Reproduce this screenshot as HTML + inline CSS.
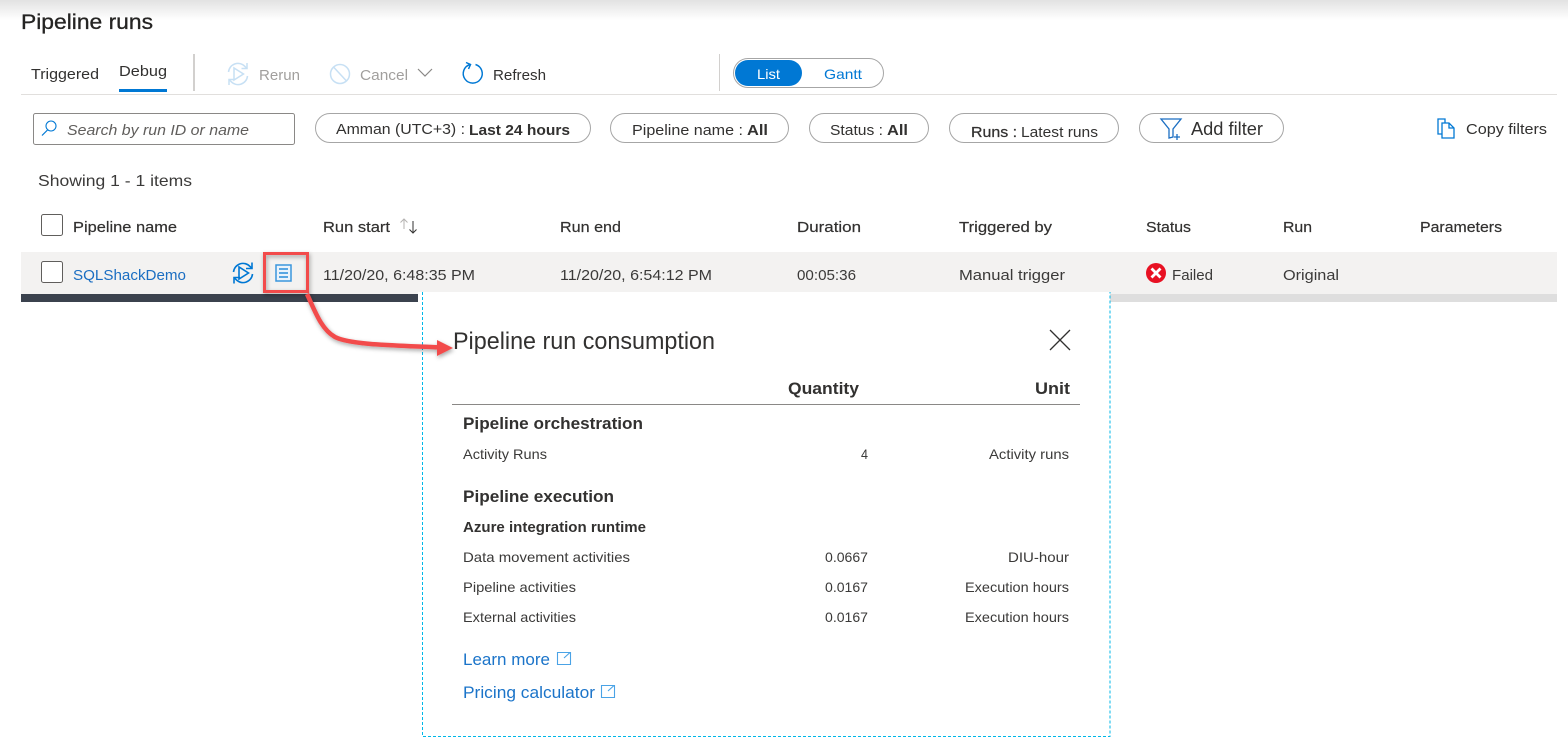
<!DOCTYPE html>
<html lang="en"><head><meta charset="utf-8"><title>Pipeline runs</title>
<style>
html,body{margin:0;padding:0;background:#fff;width:1568px;height:737px;overflow:hidden}
svg{display:block}
text{font-family:"Liberation Sans",Arial,sans-serif;fill:#323130;font-size:15px}
.b{font-weight:700}
.s{stroke:#323130;stroke-width:.25px}
.h{font-size:15px;stroke:#323130;stroke-width:.2px}
.r{font-size:15px;fill:#3b3a39}
.l{fill:#1b6ec2}
.m{font-size:14px;fill:#3b3a39}
.pill{fill:#fff;stroke:#a6a6a6;stroke-width:1}
</style></head><body>
<svg width="1568" height="737" viewBox="0 0 1568 737" xmlns="http://www.w3.org/2000/svg">
<defs>
<linearGradient id="g" x1="0" y1="0" x2="0" y2="1"><stop offset="0" stop-color="#e2e2e2"/><stop offset="1" stop-color="#fff"/></linearGradient>
<filter id="sh" x="-30%" y="-30%" width="160%" height="160%"><feDropShadow dx="1" dy="2" stdDeviation="2" flood-color="#000" flood-opacity=".35"/></filter>
</defs>
<rect width="1568" height="737" fill="#fff"/>
<rect width="1568" height="20" fill="url(#g)"/>
<text x="21" y="29" style="font-size:21px;stroke:#252423;stroke-width:.3px;fill:#252423" textLength="132" lengthAdjust="spacingAndGlyphs">Pipeline runs</text>

<!-- toolbar -->
<text x="31" y="79" textLength="68" lengthAdjust="spacingAndGlyphs">Triggered</text>
<text x="119" y="76" textLength="48" lengthAdjust="spacingAndGlyphs">Debug</text>
<rect x="119" y="89" width="48" height="3" fill="#0078d4"/>
<rect x="193" y="54" width="2" height="37" fill="#d2d0ce"/>
<rect x="719" y="54" width="1" height="37" fill="#d2d0ce"/>
<rect x="21" y="94" width="1536" height="1" fill="#e1dfdd"/>

<g fill="none" stroke="#c7e0f4" stroke-width="1.500">
<path d="M228.500 72a9.500 9.500 0 0 1 16.500-5.500l1.500 1.500"/><path d="M247 63v5.500h-5.500"/>
<path d="M247.500 76a9.500 9.500 0 0 1-16.500 5.500l-1.500-1.500"/><path d="M229 85v-5.500h5.500"/>
<path d="M234 68v12l9.500-6z"/>
<circle cx="340" cy="74" r="9.500"/><path d="M333.500 67l13 14"/>
</g>
<text x="259" y="80" style="fill:#a19f9d" textLength="41" lengthAdjust="spacingAndGlyphs">Rerun</text>
<text x="360" y="80" style="fill:#a19f9d" textLength="48" lengthAdjust="spacingAndGlyphs">Cancel</text>
<path d="M418 69l7 7 7-7" fill="none" stroke="#8a8886" stroke-width="1.200"/>
<path d="M470 64.500a9.500 9.500 0 1 0 5.500 0" fill="none" stroke="#0078d4" stroke-width="1.500"/>
<path d="M466 62.500l4.500 2-2 4.500" fill="none" stroke="#0078d4" stroke-width="1.500"/>
<text x="493" y="80" textLength="53" lengthAdjust="spacingAndGlyphs">Refresh</text>

<rect x="733.500" y="58.500" width="150" height="29" rx="14.500" class="pill"/>
<rect x="735" y="60" width="67" height="26" rx="13" fill="#0078d4"/>
<text x="757" y="79" style="font-size:14px;fill:#fff" textLength="23" lengthAdjust="spacingAndGlyphs">List</text>
<text x="824" y="79" style="font-size:14px;fill:#0078d4" textLength="38" lengthAdjust="spacingAndGlyphs">Gantt</text>

<!-- filters -->
<rect x="33.500" y="113.500" width="261" height="31" rx="2" fill="#fff" stroke="#8a8886"/>
<circle cx="51" cy="126" r="5" fill="none" stroke="#0078d4" stroke-width="1.100"/>
<path d="M47.500 130l-5.500 5.500" stroke="#0078d4" stroke-width="1.200"/>
<text x="67" y="135" style="font-style:italic;fill:#605e5c" textLength="182" lengthAdjust="spacingAndGlyphs">Search by run ID or name</text>

<rect x="315.500" y="113.500" width="275" height="29" rx="14.500" class="pill"/>
<text x="336" y="134" textLength="129" lengthAdjust="spacingAndGlyphs">Amman (UTC+3) :</text>
<text x="469" y="135" class="b" textLength="101" lengthAdjust="spacingAndGlyphs">Last 24 hours</text>
<rect x="610.500" y="113.500" width="178" height="29" rx="14.500" class="pill"/>
<text x="632" y="135" textLength="111" lengthAdjust="spacingAndGlyphs">Pipeline name :</text>
<text x="747" y="135" class="b" textLength="21" lengthAdjust="spacingAndGlyphs">All</text>
<rect x="809.500" y="113.500" width="119" height="29" rx="14.500" class="pill"/>
<text x="830" y="135" textLength="53" lengthAdjust="spacingAndGlyphs">Status :</text>
<text x="887" y="135" class="b" textLength="21" lengthAdjust="spacingAndGlyphs">All</text>
<rect x="949.500" y="113.500" width="169" height="29" rx="14.500" class="pill"/>
<text x="971" y="137" class="s" textLength="46" lengthAdjust="spacingAndGlyphs">Runs :</text>
<text x="1021" y="137" textLength="77" lengthAdjust="spacingAndGlyphs">Latest runs</text>
<rect x="1139.500" y="113.500" width="144" height="29" rx="14.500" class="pill"/>
<g fill="none" stroke="#1b6ec2" stroke-width="1.300">
<path d="M1161 119h20l-8 10v8l-4 1v-9z"/><path d="M1177 134v6M1174 137h6"/>
</g>
<text x="1191" y="135" style="font-size:18px" textLength="72" lengthAdjust="spacingAndGlyphs">Add filter</text>
<g fill="#fff" stroke="#0078d4" stroke-width="1.300">
<path d="M1438 119h7v15h-7z"/><path d="M1442 123h7l5 5v10h-12z"/><path d="M1449 123v5h5" fill="none"/>
</g>
<text x="1466" y="134" textLength="81" lengthAdjust="spacingAndGlyphs">Copy filters</text>

<text x="38" y="186" style="font-size:16px;fill:#3b3a39" textLength="154" lengthAdjust="spacingAndGlyphs">Showing 1 - 1 items</text>

<!-- table head -->
<rect x="41.500" y="214.500" width="21" height="21" rx="2" fill="#fff" stroke="#605e5c"/>
<text x="73" y="232" class="h" textLength="104" lengthAdjust="spacingAndGlyphs">Pipeline name</text>
<text x="323" y="232" class="h" textLength="67" lengthAdjust="spacingAndGlyphs">Run start</text>
<path d="M404 229v-10M400.500 222.500l3.500-3.500 3.500 3.500" fill="none" stroke="#b5b3b1"/>
<path d="M413 221v12M409.500 229.500l3.500 3.500 3.500-3.500" fill="none" stroke="#323130"/>
<text x="560" y="232" class="h" textLength="61" lengthAdjust="spacingAndGlyphs">Run end</text>
<text x="797" y="232" class="h" textLength="64" lengthAdjust="spacingAndGlyphs">Duration</text>
<text x="959" y="232" class="h" textLength="93" lengthAdjust="spacingAndGlyphs">Triggered by</text>
<text x="1146" y="232" class="h" textLength="45" lengthAdjust="spacingAndGlyphs">Status</text>
<text x="1283" y="232" class="h" textLength="29" lengthAdjust="spacingAndGlyphs">Run</text>
<text x="1420" y="232" class="h" textLength="82" lengthAdjust="spacingAndGlyphs">Parameters</text>

<!-- row -->
<rect x="21" y="252" width="1536" height="42" fill="#f3f2f1"/>
<rect x="21" y="294" width="397" height="8" fill="#3b424e"/>
<rect x="418" y="294" width="1139" height="8" fill="#dedede"/>
<rect x="41.500" y="261.500" width="21" height="21" rx="2" fill="#fff" stroke="#605e5c"/>
<text x="73" y="280" class="l" textLength="113" lengthAdjust="spacingAndGlyphs">SQLShackDemo</text>
<g fill="none" stroke="#0078d4" stroke-width="1.600">
<path d="M233.500 272a9.500 9.500 0 0 1 16.500-5.500l1.500 1.500"/><path d="M252 262.500v6h-6"/>
<path d="M252.500 274a9.500 9.500 0 0 1-16.500 5.500l-1.500-1.500"/><path d="M234 283.500v-6h6"/>
<path d="M239 267v12l9.500-6z"/>
</g>
<rect x="276" y="265" width="15" height="16" fill="#eaf3fb" stroke="#3a96dd" stroke-width="1.500"/>
<path d="M279 269h9M279 273h9M279 277h9" fill="none" stroke="#0078d4" stroke-width="1.200"/>
<text x="323" y="280" class="r" textLength="152" lengthAdjust="spacingAndGlyphs">11/20/20, 6:48:35 PM</text>
<text x="560" y="280" class="r" textLength="152" lengthAdjust="spacingAndGlyphs">11/20/20, 6:54:12 PM</text>
<text x="797" y="280" class="r" textLength="59" lengthAdjust="spacingAndGlyphs">00:05:36</text>
<text x="959" y="280" class="r" textLength="106" lengthAdjust="spacingAndGlyphs">Manual trigger</text>
<circle cx="1156" cy="273" r="10" fill="#e81123"/>
<path d="M1151.500 268.500l9 9M1160.500 268.500l-9 9" stroke="#fff" stroke-width="2.800"/>
<text x="1172" y="280" class="r" textLength="41" lengthAdjust="spacingAndGlyphs">Failed</text>
<text x="1283" y="280" class="r" textLength="56" lengthAdjust="spacingAndGlyphs">Original</text>

<!-- panel -->
<rect x="418" y="292" width="692" height="445" fill="#fff"/>
<path d="M422.500 292V736.500H1110V292" fill="none" stroke="#00b7e8" stroke-width="1" stroke-dasharray="3 2"/>
<text x="453" y="349" style="font-size:24px;fill:#323130" textLength="262" lengthAdjust="spacingAndGlyphs">Pipeline run consumption</text>
<path d="M1050 330l20 20M1070 330l-20 20" stroke="#323130" stroke-width="1.300"/>
<text x="788" y="394" class="b" style="font-size:17px" textLength="71" lengthAdjust="spacingAndGlyphs">Quantity</text>
<text x="1035" y="394" class="b" style="font-size:17px" textLength="35" lengthAdjust="spacingAndGlyphs">Unit</text>
<rect x="452" y="404" width="628" height="1" fill="#8a8886"/>
<text x="463" y="429" class="b" style="font-size:17px" textLength="180" lengthAdjust="spacingAndGlyphs">Pipeline orchestration</text>
<text x="463" y="459" class="m" textLength="84" lengthAdjust="spacingAndGlyphs">Activity Runs</text>
<text x="861" y="459" class="m" textLength="7" lengthAdjust="spacingAndGlyphs">4</text>
<text x="989" y="459" class="m" textLength="80" lengthAdjust="spacingAndGlyphs">Activity runs</text>
<text x="463" y="502" class="b" style="font-size:17px" textLength="151" lengthAdjust="spacingAndGlyphs">Pipeline execution</text>
<text x="463" y="532" class="b" style="font-size:14.500px" textLength="183" lengthAdjust="spacingAndGlyphs">Azure integration runtime</text>
<text x="463" y="562" class="m" textLength="167" lengthAdjust="spacingAndGlyphs">Data movement activities</text>
<text x="825" y="562" class="m" textLength="43" lengthAdjust="spacingAndGlyphs">0.0667</text>
<text x="1008" y="562" class="m" textLength="61" lengthAdjust="spacingAndGlyphs">DIU-hour</text>
<text x="463" y="592" class="m" textLength="113" lengthAdjust="spacingAndGlyphs">Pipeline activities</text>
<text x="825" y="592" class="m" textLength="43" lengthAdjust="spacingAndGlyphs">0.0167</text>
<text x="965" y="592" class="m" textLength="104" lengthAdjust="spacingAndGlyphs">Execution hours</text>
<text x="463" y="622" class="m" textLength="113" lengthAdjust="spacingAndGlyphs">External activities</text>
<text x="825" y="622" class="m" textLength="43" lengthAdjust="spacingAndGlyphs">0.0167</text>
<text x="965" y="622" class="m" textLength="104" lengthAdjust="spacingAndGlyphs">Execution hours</text>
<text x="463" y="665" style="font-size:17px;fill:#1b74c9" textLength="87" lengthAdjust="spacingAndGlyphs">Learn more</text>
<path d="M557.500 652.500h13v12h-13zM564 658l6-5.500M566.500 652.500h4v4" fill="none" stroke="#4aa3e6" stroke-width="1.100"/>
<text x="463" y="698" style="font-size:17px;fill:#1b74c9" textLength="132" lengthAdjust="spacingAndGlyphs">Pricing calculator</text>
<path d="M601.500 685.500h13v12h-13zM608 691l6-5.500M610.500 685.500h4v4" fill="none" stroke="#4aa3e6" stroke-width="1.100"/>

<!-- annotation -->
<rect x="264.500" y="253.500" width="43" height="38" fill="none" stroke="#f24b4b" stroke-width="3" filter="url(#sh)"/>
<g filter="url(#sh)">
<path d="M307 294C315 311 321 329 335 337C350 345 400 345.500 440 347.500" fill="none" stroke="#f24b4b" stroke-width="4.500"/>
<path d="M437 340L453 348L437 356z" fill="#f24b4b"/>
</g>
</svg>
</body></html>
